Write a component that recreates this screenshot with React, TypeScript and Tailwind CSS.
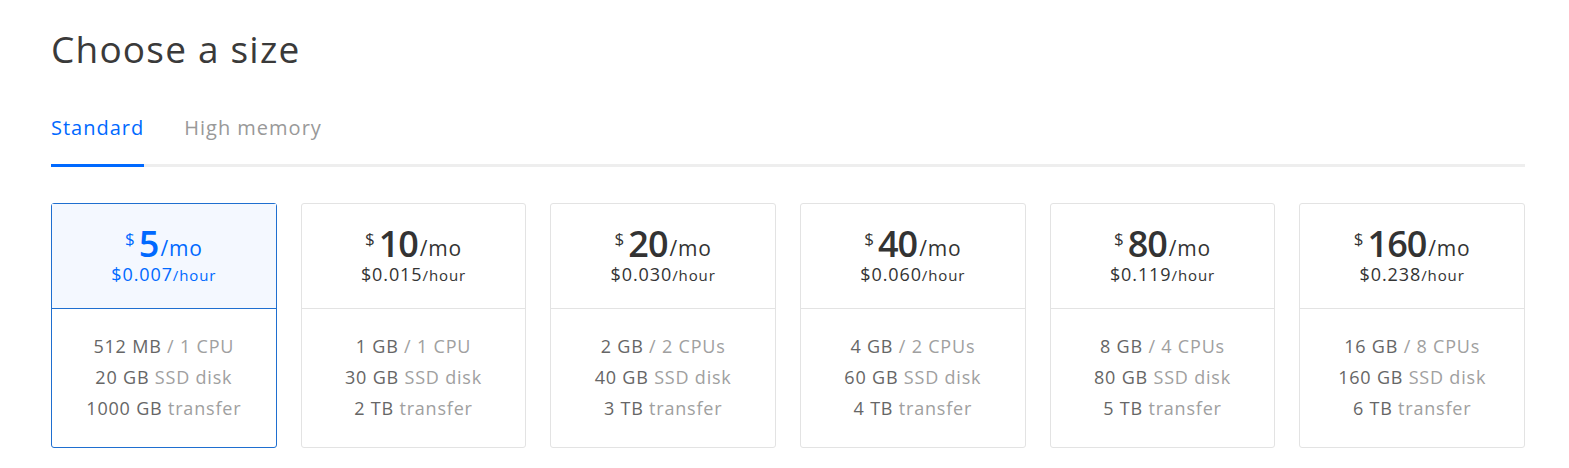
import { useState } from 'react';

interface Size {
  price: number;
  hourly: string;
  mem: string;
  cpu: string;
  disk: string;
  transfer: string;
}

const SIZES: Size[] = [
  { price: 5, hourly: '$0.007', mem: '512 MB', cpu: '1 CPU', disk: '20 GB', transfer: '1000 GB' },
  { price: 10, hourly: '$0.015', mem: '1 GB', cpu: '1 CPU', disk: '30 GB', transfer: '2 TB' },
  { price: 20, hourly: '$0.030', mem: '2 GB', cpu: '2 CPUs', disk: '40 GB', transfer: '3 TB' },
  { price: 40, hourly: '$0.060', mem: '4 GB', cpu: '2 CPUs', disk: '60 GB', transfer: '4 TB' },
  { price: 80, hourly: '$0.119', mem: '8 GB', cpu: '4 CPUs', disk: '80 GB', transfer: '5 TB' },
  { price: 160, hourly: '$0.238', mem: '16 GB', cpu: '8 CPUs', disk: '160 GB', transfer: '6 TB' },
];

export default function App() {
  const [tab, setTab] = useState('standard');
  const [selected, setSelected] = useState(5);

  return (
    <div className="min-h-screen bg-white px-[51px] pt-[26px] font-['Open_Sans','Liberation_Sans',sans-serif] text-[#333]">
      <h1 className="text-[37px] leading-[46px] font-normal text-[#3a3a3a] tracking-[1.2px]">Choose a size</h1>

      {/* Tabs */}
      <div className="mt-[43px] flex gap-[40px] border-b-[3px] border-[#eee] w-[1474px]">
        <button
          onClick={() => setTab('standard')}
          className={`-mb-[3px] pb-[23px] text-[20px] leading-[26px] tracking-[1px] border-b-[3px] ${
            tab === 'standard' ? 'border-[#0069ff] text-[#0069ff]' : 'border-transparent text-[#999]'
          }`}
        >
          Standard
        </button>
        <button
          onClick={() => setTab('high')}
          className={`-mb-[3px] pb-[23px] text-[20px] leading-[26px] tracking-[1px] border-b-[3px] ${
            tab === 'high' ? 'border-[#0069ff] text-[#0069ff]' : 'border-transparent text-[#999]'
          }`}
        >
          High memory
        </button>
      </div>

      {/* Cards */}
      <div className="mt-[36px] grid grid-cols-6 gap-[24px] w-[1474px]">
        {SIZES.map((s) => {
          const active = s.price === selected;
          return (
            <div
              key={s.price}
              onClick={() => setSelected(s.price)}
              className={`cursor-pointer rounded-[3px] border h-[245px] flex flex-col ${
                active ? 'border-[#1f6fd0]' : 'border-[#e3e3e3]'
              }`}
            >
              <div
                className={`h-[105px] flex flex-col items-center pt-[22px] border-b ${
                  active ? 'bg-[#f4f8ff] border-[#1f6fd0] text-[#0069ff]' : 'border-[#e3e3e3] text-[#333]'
                }`}
              >
                <div className="flex items-start leading-none h-[36px]">
                  <span className="text-[17px] mt-[4px] mr-[4px]">$</span>
                  <span className="text-[36px] font-semibold tracking-[-1px] leading-[36px]">{s.price}</span>
                  <span className="text-[21px] mt-[12px] ml-[2px] tracking-[0.8px]">/mo</span>
                </div>
                <div className="leading-[24px] tracking-[0.9px]">
                  <span className="text-[18px]">{s.hourly}</span>
                  <span className="text-[15px]">/hour</span>
                </div>
              </div>
              <div className="flex-1 flex flex-col items-center justify-center pb-[2px] text-[18px] leading-[31px] tracking-[0.8px] text-[#a0a0a0]">
                <p>
                  <span className="text-[#666]">{s.mem}</span> / {s.cpu}
                </p>
                <p>
                  <span className="text-[#666]">{s.disk}</span> SSD disk
                </p>
                <p>
                  <span className="text-[#666]">{s.transfer}</span> transfer
                </p>
              </div>
            </div>
          );
        })}
      </div>
    </div>
  );
}
